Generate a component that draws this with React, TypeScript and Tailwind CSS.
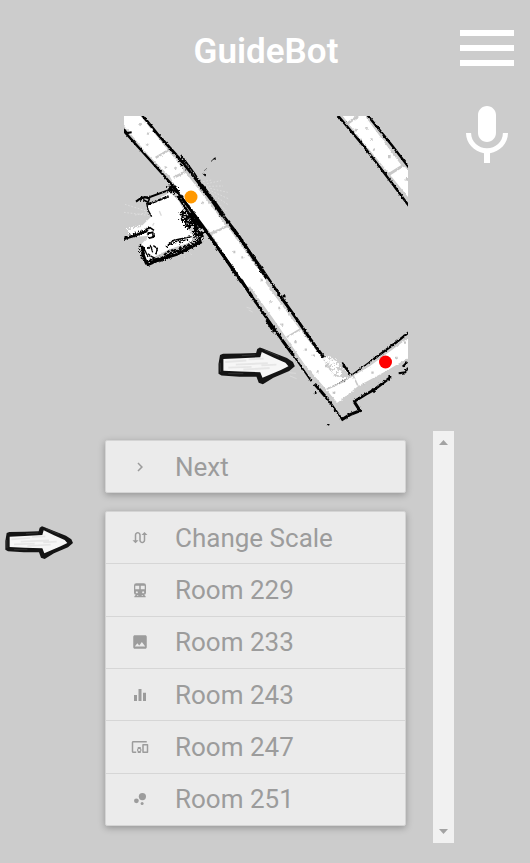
import type { ComponentType } from 'react';
import {
  MdSwapCalls,
  MdImage,
  MdEqualizer,
  MdDevicesOther,
  MdBubbleChart,
  MdChevronRight,
  MdMenu,
  MdMic,
} from 'react-icons/md';

type Item = { label: string; icon: ComponentType<{ className?: string }> };

function SubwayIcon({ className }: { className?: string }) {
  return (
    <svg viewBox="0 0 24 24" className={className} fill="currentColor" fillRule="evenodd">
      <path d="M7 3h10a3 3 0 0 1 3 3v9.500a3 3 0 0 1-2.600 2.950L19.500 20.300V21.500H4.500V20.300L6.600 18.450A3 3 0 0 1 4 15.500V6a3 3 0 0 1 3-3z M5.700 6.300v4.700h5.300V6.300z M13 6.300v4.700h5.300V6.300z M7.800 13.500a1.400 1.400 0 1 0 .01 0z M16.200 13.500a1.400 1.400 0 1 0 .01 0z M8.500 18.500l-1 1.200h1.800l.8-1.200z M15.500 18.500l1 1.200h-1.800l-.8-1.200z" />
    </svg>
  );
}

const items: Item[] = [
  { label: 'Change Scale', icon: MdSwapCalls },
  { label: 'Room 229', icon: SubwayIcon },
  { label: 'Room 233', icon: MdImage },
  { label: 'Room 243', icon: MdEqualizer },
  { label: 'Room 247', icon: MdDevicesOther },
  { label: 'Room 251', icon: MdBubbleChart },
];

function Row({ label, icon: Icon }: Item) {
  return (
    <button
      type="button"
      className="flex w-full flex-1 items-center gap-[26px] pl-[25px] text-left text-[26px] leading-8 text-[#9c9c9c]"
    >
      <Icon className="size-[18px] shrink-0" />
      <span>{label}</span>
    </button>
  );
}

/* Hand-inked arrow, drawn in a 210 x 100 box. */
function ArrowShape() {
  return (
    <>
      <path d="M8 21 L16 18 L62 17 L104 16 L107 5 L114 1 L122 4 L150 15 L186 29 L202 40 L207 51 L192 64 L150 82 L122 99 L111 95 L105 79 L60 79 L12 76 L4 71 L4 45 Z" fill="#141414" />
      <path d="M17 32 L62 30 L115 27 L119 13 L150 28 L182 42 L190 51 L170 61 L121 82 L115 67 L62 65 L17 63 Z" fill="#f6f6f6" />
      <path d="M22 40 L78 36 M50 47 L135 43 M30 55 L92 53 M70 60 L140 56 M84 33 L124 31 M118 49 L158 47" stroke="#e6e6e6" strokeWidth="5" fill="none" />
      <path d="M8 42 L9 66 M66 23 L102 21 M30 71 L70 71 M126 8 L165 25" stroke="#3c3c3c" strokeWidth="2" fill="none" />
    </>
  );
}

function FloorMap() {
  return (
    <svg viewBox="124 116 284 315" className="block w-[284px]" role="img" aria-label="Floor map">
      <defs>
        <filter id="rough" x="-5%" y="-5%" width="110%" height="110%" colorInterpolationFilters="sRGB">
          <feTurbulence type="fractalNoise" baseFrequency="0.13" numOctaves="2" seed="4" />
          <feDisplacementMap in="SourceGraphic" scale="8" xChannelSelector="R" yChannelSelector="G" />
        </filter>
        <filter id="scatter" x="-10%" y="-10%" width="120%" height="120%" colorInterpolationFilters="sRGB">
          <feTurbulence type="fractalNoise" baseFrequency="0.18" numOctaves="2" seed="9" />
          <feDisplacementMap in="SourceGraphic" scale="24" xChannelSelector="R" yChannelSelector="G" />
        </filter>
      </defs>

      {/* Upper-left half of the long corridor */}
      <g transform="translate(115 105) scale(.33333)">
        <g filter="url(#rough)">
          <path d="M20 28 H72 L185 168 L262 268 L330 358 L450 520 V545 H392 L290 388 L205 285 L165 215 L100 150 L20 54Z" fill="#fff" />
          <path d="M122 158 L160 136 M176 218 L212 200 M288 388 L338 362" stroke="#c8c8c8" strokeWidth="7" />
          <path d="M72 55l6 6M96 85l6 2M92 117l8 3M148 186l8 3M178 188l7 2M260 292l6 3M356 440l7 2M378 457l6 2" stroke="#cacaca" strokeWidth="7" />
        </g>
        <g stroke="#000" fill="none" filter="url(#rough)">
          <path d="M80 28 L130 90 L184 150" strokeWidth="8" />
          <path d="M184 150 L222 196 L265 252" strokeWidth="8" />
          <path d="M198 150 L240 208 L262 244" strokeWidth="5" />
          <path d="M258 240 L300 296 L326 334" strokeWidth="13" />
          <path d="M326 334 L368 388 L455 520" strokeWidth="9" />
          <path d="M22 73 L100 160 L172 240" strokeWidth="7" />
          <path d="M27 72 L36 84 L50 82" strokeWidth="6" />
          <path d="M172 240 L215 298 L262 362 L310 430 L380 532" strokeWidth="9" />
          <path d="M228 322 L262 370" strokeWidth="14" />
          <path d="M292 166l10-8M264 205l8 8M270 198l3-6M364 388l8 8" strokeWidth="4" />
        </g>
        <path d="M190 152 L222 192 M194 164 L204 184" stroke="#000" strokeWidth="8" strokeDasharray="6 4" filter="url(#scatter)" />
        <g stroke="#e4e4e4" strokeWidth="2" fill="none" strokeDasharray="5 5">
          <path d="M266 238 L318 227 M272 244 L324 243 M276 248 L338 262 M280 254 L342 282 M284 262 L338 298 M288 272 L334 318 M264 230 L290 225" />
          <path d="M30 298 L100 320 M27 322 L108 332 M60 330 L100 322 M215 430 L230 450 M205 435 L209 458" />
        </g>
      </g>

      {/* Room beside the corridor */}
      <g transform="translate(120 175) scale(.33333)">
        <path d="M82 92 L150 52 L178 80 L192 110 L196 150 L218 180 L215 200 L150 222 L78 258 L62 210 L88 182 L40 186 L30 168 L62 156 L95 124Z" fill="#fff" filter="url(#rough)" />
        <path d="M24 162 L56 154 L54 176 L24 185Z" fill="#fff" filter="url(#scatter)" />
        <g stroke="#000" fill="none" filter="url(#rough)">
          <path d="M48 80 L64 68 L90 66 L150 44" strokeWidth="6" />
          <path d="M60 76 L74 66 L88 72 L84 82 L70 74" strokeWidth="5" />
          <path d="M82 88 L110 78 L146 64" strokeWidth="7" strokeDasharray="14 2" />
          <path d="M80 84 L84 105 L95 125" strokeWidth="4" />
          <path d="M58 210 L68 218 L70 240 L80 268" strokeWidth="9" />
          <path d="M80 270 L115 255 L170 238 L245 200" strokeWidth="9" />
          <path d="M12 192 L45 182 L82 168" strokeWidth="7" />
          <path d="M76 164 L90 158 L102 166 M82 176 L98 172 L100 186 L84 190" strokeWidth="5" />
          <path d="M82 222 L92 212 L98 232 M100 212 L112 220 L108 238 M84 236 L94 244 L106 250 M74 224 L84 246" strokeWidth="4" />
          <path d="M138 216 L160 196 L180 192 L215 185" strokeWidth="4" />
          <path d="M132 240 L150 226 L172 228 L196 212 L214 210" strokeWidth="6" strokeDasharray="10 3" />
          <path d="M172 62 L196 98 L216 130 L232 160 L246 186" strokeWidth="7" />
        </g>
        <g stroke="#000" fill="none" filter="url(#scatter)">
          <path d="M146 32 L164 34 L170 46 L154 52 L146 40 L164 42" strokeWidth="7" />
          <path d="M186 106 L202 130 L190 134 L214 146 L200 158" strokeWidth="9" />
          <path d="M184 112 L196 152 L210 160" strokeWidth="6" />
          <path d="M208 120 L228 152 L226 180 L246 176 L238 200 L222 196" strokeWidth="11" />
          <path d="M84 262 L135 248 L150 236 L196 222 L232 202" strokeWidth="12" strokeDasharray="16 3" />
          <path d="M146 208 L178 198 L204 192" strokeWidth="7" strokeDasharray="10 4" />
          <path d="M14 190 L34 184 L60 170 L84 168" strokeWidth="7" strokeDasharray="10 4" />
          <path d="M62 216 L66 244 L78 262" strokeWidth="8" strokeDasharray="10 3" />
        </g>
        <path d="M118 108l6 14M98 152l4-8" stroke="#dadada" strokeWidth="4" />
      </g>

      {/* Corridor at the upper right */}
      <g transform="translate(260 105) scale(.33333)">
        <g filter="url(#rough)">
          <path d="M241 24 H308 L425 182 L455 200 V290 L394 214 L310 112Z" fill="#fff" />
          <path d="M262 56 L296 32 M384 210 L432 180" stroke="#c8c8c8" strokeWidth="8" />
          <path d="M316 70l7 0M331 104l7 0M340 132l4 4M384 156l8 0M285 74l6 3M437 222l8 2" stroke="#c8c8c8" strokeWidth="8" />
        </g>
        <path d="M229 26 L310 122 L400 240 L452 310 M319 26 L398 124 L452 194" stroke="#000" strokeWidth="7" fill="none" filter="url(#rough)" />
      </g>

      {/* Lower corridor and the right-hand arm */}
      <g transform="translate(210 230) scale(.33333)">
        <g filter="url(#rough)">
          <path d="M8 14 L60 0 L110 72 L180 178 L262 288 L340 390 L372 440 L424 442 L480 408 L600 320 V380 L530 422 L445 468 L382 518 L350 480 L285 405 L190 266 L70 100Z" fill="#fff" />
          <path d="M0 10 L24 0 M230 322 L270 298 M350 478 L405 452 L424 438 M430 438 L444 468" stroke="#c9c9c9" strokeWidth="5" />
          <path d="M70 66h6M94 82h6M152 150h6M178 217h7M205 234h6M214 284h6M253 336h7M284 359h7M308 377h7M345 408h7M320 424h6M368 488h8M484 428h7M556 384h7M582 338h6M458 462h6" stroke="#c4c4c4" strokeWidth="7" />
        </g>
        <g filter="url(#scatter)" stroke="#fff" fill="none">
          <path d="M346 384 L374 404 L370 422 L394 432" strokeWidth="18" strokeDasharray="14 3" />
          <path d="M374 384 L386 410 L408 422" strokeWidth="4" strokeDasharray="4 6" />
          <path d="M374 500 L402 492 L424 478" strokeWidth="12" strokeDasharray="12 3" />
        </g>
        <path d="M110 232l14 4M116 240l12 6M236 428l22 2M240 438l20 8" stroke="#e0e0e0" strokeWidth="2" />
        <g stroke="#000" fill="none" filter="url(#rough)">
          <path d="M66 -4 L88 22 L150 108 L210 196" strokeWidth="7" />
          <path d="M205 190 L258 264 L300 326 L341 382" strokeWidth="9" />
          <path d="M78 16l10 4M218 200l8-4M222 194l2 8" strokeWidth="6" />
          <path d="M0 22 L60 104 L104 168 L160 250 L216 330" strokeWidth="8" />
          <path d="M92 148 L126 200 M170 270 L192 306 M216 330 L250 376" strokeWidth="9" />
          <path d="M160 250 L250 376 L304 454" strokeWidth="5" />
          <path d="M314 462 L352 506" strokeWidth="9" />
          <path d="M352 506 L398 570" strokeWidth="6" />
          <path d="M394 570 L420 554 L450 542 L432 514" strokeWidth="9" />
          <path d="M430 516 L466 494 L494 478 L544 440" strokeWidth="8" />
          <path d="M486 476l8 12M536 436l6 6M566 430l20-3 8-14M578 410l14-14" strokeWidth="6" />
          <path d="M396 398 L406 412 L420 432" strokeWidth="7" />
          <path d="M424 436 L490 388" strokeWidth="4" />
          <path d="M490 388 L560 336 L600 304" strokeWidth="7" />
          <path d="M317 486v8M352 582l6 3" strokeWidth="5" />
        </g>
      </g>

      <circle cx="191" cy="197" r="6.500" fill="#ff9800" />
      <circle cx="385.5" cy="362" r="6.500" fill="#f00" />
      <g transform="translate(217 347) scale(.376)">
        <ArrowShape />
      </g>
    </svg>
  );
}

export default function App() {
  return (
    <div className="flex min-h-screen bg-[#ccc] font-['Roboto',sans-serif]">
      <aside className="w-[78px] shrink-0 pt-[526px] pl-1">
        <svg viewBox="0 0 210 100" className="block w-[70px]" role="img" aria-label="Arrow pointing to Change Scale">
          <ArrowShape />
        </svg>
      </aside>

      <main className="flex min-w-0 flex-1 flex-col items-center pb-5">
        <h1 className="flex h-[116px] items-start pt-[31px] text-[35px] leading-[42px] font-semibold text-white">GuideBot</h1>
        <FloorMap />
        <section className="flex w-full" aria-label="Destinations">
          <div className="flex min-w-0 flex-1 flex-col gap-[18px] px-[27px] pt-[9px] pb-[17px]">
            <div className="flex min-h-[53px] rounded-xs border border-[#d4d4d4] bg-[#ebebeb] shadow-[0_2px_7px_rgba(0,0,0,0.28)]">
              <Row label="Next" icon={MdChevronRight} />
            </div>
            <div className="flex min-h-[315px] flex-col divide-y divide-[#d6d6d6] rounded-xs border border-[#d4d4d4] bg-[#ebebeb] shadow-[0_2px_7px_rgba(0,0,0,0.28)]">
              {items.map((item) => (
                <Row key={item.label} {...item} />
              ))}
            </div>
          </div>
          <div className="flex w-[21px] shrink-0 flex-col items-center justify-between bg-[#f1f1f1] py-[9px] text-[#a3a3a3]">
            <button type="button" aria-label="Scroll up">
              <svg viewBox="0 0 9 5" className="block w-[9px]" fill="currentColor"><path d="M0 5 4.500 0 9 5z" /></svg>
            </button>
            <button type="button" aria-label="Scroll down">
              <svg viewBox="0 0 9 5" className="block w-[9px]" fill="currentColor"><path d="M0 0h9L4.500 5z" /></svg>
            </button>
          </div>
        </section>
      </main>

      <nav className="flex w-[76px] shrink-0 flex-col items-end gap-4 pt-3 pr-[7px] text-white" aria-label="Controls">
        <button type="button" aria-label="Menu"><MdMenu className="size-[72px]" /></button>
        <button type="button" aria-label="Voice input"><MdMic className="size-[72px]" /></button>
      </nav>
    </div>
  );
}
